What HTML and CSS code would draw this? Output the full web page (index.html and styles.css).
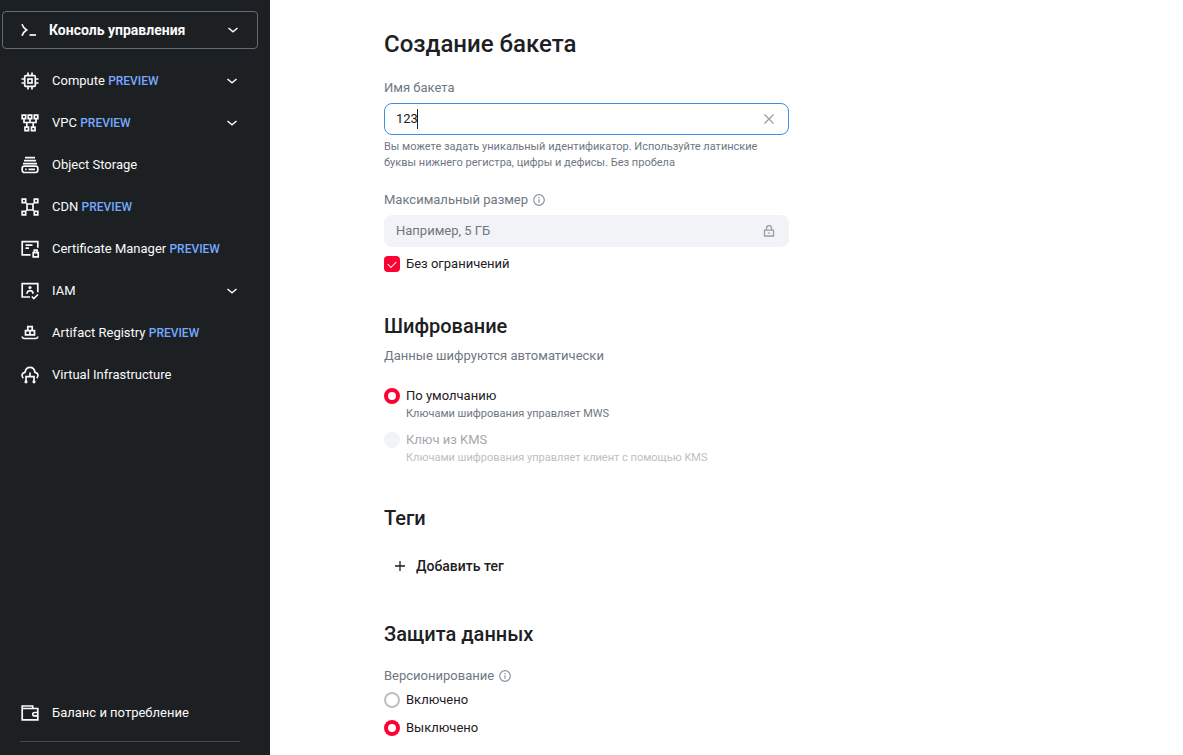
FILE: index.html
```html
<!DOCTYPE html>
<html lang="ru">
<head>
<meta charset="utf-8">
<meta name="viewport" content="width=device-width, initial-scale=1">
<title>Создание бакета</title>
<link rel="stylesheet" href="styles.css">
</head>
<body>
<div class="app">
  <aside class="sidebar">
    <button type="button" class="console">
      <svg class="icon" viewBox="0 0 20 20"><path d="M3 4.200c1 2.800 2.600 4.600 4.600 5.800-2 1.200-3.600 3-4.600 5.800"/><path d="M10.500 15H17"/></svg>
      <span class="console-title">Консоль управления</span>
      <svg class="chevron" viewBox="0 0 12 12"><path d="M1.500 4 6 7.800 10.500 4"/></svg>
    </button>
    <nav class="nav">
      <button type="button" class="nav-item">
        <svg class="icon" viewBox="0 0 20 20"><rect x="4.700" y="4.700" width="10.600" height="10.600" rx="1"/><rect x="8" y="8" width="4" height="4"/><path d="M8 4.500v-3M12 4.500v-3M8 18.500v-3M12 18.500v-3M4.500 8h-3M4.500 12h-3M18.500 8h-3M18.500 12h-3"/></svg>
        <span class="nav-name">Compute <span class="preview">PREVIEW</span></span>
        <svg class="chevron" viewBox="0 0 12 12"><path d="M1.500 4 6 7.800 10.500 4"/></svg>
      </button>
      <button type="button" class="nav-item">
        <svg class="icon" viewBox="0 0 20 20"><path d="M2.200 2.200h3.500v3.500H2.200zM8.200 2.200h3.500v3.500H8.200zM14.300 2.200h3.500v3.500h-3.500zM5 14.200h3.500v3.500H5zM11.500 14.200h3.500v3.500h-3.500zM4 6v3.500h12V6M10 6v3.500M6.800 9.500v4.500M13.200 9.500v4.500"/></svg>
        <span class="nav-name">VPC <span class="preview">PREVIEW</span></span>
        <svg class="chevron" viewBox="0 0 12 12"><path d="M1.500 4 6 7.800 10.500 4"/></svg>
      </button>
      <a class="nav-item" href="#storage">
        <svg class="icon" viewBox="0 0 20 20"><path d="M5 2.700h10M4 5.700h12M3 8.700h14"/><rect x="2.200" y="11.200" width="15.600" height="6.300" rx="2.200"/><path d="M5.200 14.300h1.500M8.500 14.300h6.500"/></svg>
        <span class="nav-name">Object Storage</span>
      </a>
      <a class="nav-item" href="#cdn">
        <svg class="icon" viewBox="0 0 20 20"><path d="M2.200 2.200h3.500v3.500H2.200zM14.300 2.200h3.500v3.500h-3.500zM2.200 14.300h3.500v3.500H2.200zM14.300 14.300h3.500v3.500h-3.500zM7 7h6v6H7zM5.500 5.500l2 2M14.500 5.500l-2 2M5.500 14.500l2-2M14.500 14.500l-2-2"/></svg>
        <span class="nav-name">CDN <span class="preview">PREVIEW</span></span>
      </a>
      <a class="nav-item" href="#certificates">
        <svg class="icon" viewBox="0 0 20 20"><path d="M10.500 15.800H2.200V2.700h15.600v6M5.500 6.200h7M5.500 9.200H9"/><path d="M13.200 13.700h5v4.100h-5zM14.300 13.500v-2.300h2.800v2.300"/></svg>
        <span class="nav-name">Certificate Manager <span class="preview">PREVIEW</span></span>
      </a>
      <button type="button" class="nav-item">
        <svg class="icon" viewBox="0 0 20 20"><path d="M10 16H2.200V2.700h15.600v8.500M11.800 15.500l2 2 4.200-4"/><path d="M7 12.700c0-4.200 6-4.200 6 0"/><circle class="solid" cx="10" cy="6.500" r="1.600"/></svg>
        <span class="nav-name">IAM</span>
        <svg class="chevron" viewBox="0 0 12 12"><path d="M1.500 4 6 7.800 10.500 4"/></svg>
      </button>
      <a class="nav-item" href="#artifacts">
        <svg class="icon" viewBox="0 0 20 20"><path d="M7.800 3.700h4.400v4H7.800zM5.500 7.700H10v4.200H5.500zM10 7.700h4.500v4.200H10zM2.200 13.500c.2 1.500.8 2 2 2h11.600c1.200 0 1.800-.5 2-2"/></svg>
        <span class="nav-name">Artifact Registry <span class="preview">PREVIEW</span></span>
      </a>
      <a class="nav-item" href="#infrastructure">
        <svg class="icon" viewBox="0 0 20 20"><path d="M3.300 13.200C.5 10.500 2.500 7.600 5 7.300 5.500 3.800 7.800 2.300 10 2.300s4.500 1.500 5 5c2.500.3 4.500 3.200 1.700 5.900M10 7.500v4.200M6 16.500v-4.800h8v4.800"/><circle class="solid" cx="6" cy="16.800" r="1.600"/><circle class="solid" cx="14" cy="16.800" r="1.600"/></svg>
        <span class="nav-name">Virtual Infrastructure</span>
      </a>
    </nav>
    <div class="sidebar-footer">
      <a class="nav-item" href="#balance">
        <svg class="icon" viewBox="0 0 20 20"><path d="M2.200 5.500V3h10.500v2.500M2.200 5.500h15.600v11.300H2.200zM17.800 9.500h-3.300a1.700 1.700 0 0 0 0 3.400h3.300"/></svg>
        <span class="nav-name">Баланс и потребление</span>
      </a>
    </div>
  </aside>

  <main class="content">
    <form class="form">
      <h1 class="title">Создание бакета</h1>

      <div class="field">
        <label class="label" for="bucket-name">Имя бакета</label>
        <div class="control control-active">
          <input class="input" id="bucket-name" type="text" value="123" autofocus>
          <button type="button" class="clear" aria-label="Очистить">
            <svg class="glyph" viewBox="0 0 12 12"><path d="M1.500 1.500l9 9M10.500 1.500l-9 9"/></svg>
          </button>
        </div>
        <p class="hint">Вы можете задать уникальный идентификатор. Используйте латинские буквы нижнего регистра, цифры и дефисы. Без пробела</p>
      </div>

      <div class="field field-size">
        <div class="label-row">
          <label class="label" for="max-size">Максимальный размер</label>
          <svg class="info" viewBox="0 0 12 12"><circle cx="6" cy="6" r="5.300"/><path d="M6 5.200v3.600M6 3v1.200"/></svg>
        </div>
        <div class="control control-locked">
          <input class="input" id="max-size" type="text" placeholder="Например, 5 ГБ" disabled>
          <svg class="glyph" viewBox="0 0 12 12"><path d="M1.500 5.200h9v5.800h-9zM3.500 5V3.200a2.500 2.500 0 0 1 5 0V5M6 7.200v1.800"/></svg>
        </div>
        <label class="choice unlimited"><input class="check" type="checkbox" checked><span>Без ограничений</span></label>
      </div>

      <section class="section">
        <h2 class="heading">Шифрование</h2>
        <p class="note">Данные шифруются автоматически</p>
        <div class="choices encryption">
          <label class="choice">
            <input class="radio" type="radio" name="encryption" checked>
            <span>По умолчанию<span class="choice-note">Ключами шифрования управляет MWS</span></span>
          </label>
          <label class="choice choice-disabled">
            <input class="radio" type="radio" name="encryption" disabled>
            <span>Ключ из KMS<span class="choice-note">Ключами шифрования управляет клиент с помощью KMS</span></span>
          </label>
        </div>
      </section>

      <section class="section">
        <h2 class="heading">Теги</h2>
        <button type="button" class="add">
          <svg class="glyph" viewBox="0 0 12 12"><path d="M6 1v10M1 6h10"/></svg>
          Добавить тег
        </button>
      </section>

      <section class="section">
        <h2 class="heading">Защита данных</h2>
        <div class="versioning">
          <div class="label-row">
            <span class="label" id="versioning-label">Версионирование</span>
            <svg class="info" viewBox="0 0 12 12"><circle cx="6" cy="6" r="5.300"/><path d="M6 5.200v3.600M6 3v1.200"/></svg>
          </div>
          <div class="choices" role="radiogroup" aria-labelledby="versioning-label">
            <label class="choice"><input class="radio" type="radio" name="versioning"><span>Включено</span></label>
            <label class="choice"><input class="radio" type="radio" name="versioning" checked><span>Выключено</span></label>
          </div>
        </div>
      </section>
    </form>
  </main>
</div>
</body>
</html>
```
FILE: styles.css
```css
*, *::before, *::after { box-sizing: border-box; }

body {
  margin: 0;
  background: #fff;
  color: #1d2023;
  font-family: Roboto, "Noto Sans", sans-serif;
  font-size: 13px;
  line-height: 20px;
}

h1, h2, p { margin: 0; }

button, input { font: inherit; color: inherit; }

button {
  padding: 0;
  border: 0;
  background: none;
  text-align: left;
  cursor: pointer;
}

svg { flex: none; fill: none; stroke: currentColor; stroke-width: 1.5; }

.app { display: flex; height: 100vh; }

.sidebar {
  display: flex;
  flex: none;
  flex-direction: column;
  width: 270px;
  padding: 11px 0 13px;
  background: #1d2023;
  color: #fafafa;
}

.console {
  display: flex;
  align-items: center;
  gap: 10px;
  height: 38px;
  margin: 0 12px 0 2px;
  padding: 0 18px 0 16px;
  border: 1px solid #626c77;
  border-radius: 4px;
  font-size: 14px;
  font-weight: 700;
}

.console-title { flex: 1; }

.icon { width: 20px; height: 20px; stroke-width: 1.7; }
.solid { fill: currentColor; stroke: none; }
.chevron { width: 12px; height: 12px; }

.nav { display: flex; flex-direction: column; padding-top: 11px; }

.nav-item {
  display: flex;
  align-items: center;
  gap: 12px;
  height: 42px;
  padding: 0 32px 0 20px;
  color: inherit;
  text-decoration: none;
}

.nav-name { flex: 1; white-space: nowrap; }
.preview { color: #74a9ff; font-size: 12px; font-weight: 500; }

.sidebar-footer { margin-top: auto; }

.sidebar-footer::after {
  content: "";
  display: block;
  height: 1px;
  margin: 7px 30px 0 20px;
  background: #45494d;
}

.content {
  flex: 1;
  min-width: 0;
  padding: 30px 32px 16px 114px;
  overflow: hidden;
}

.form { max-width: 405px; }

.title { font-size: 24px; font-weight: 500; line-height: 28px; }
.heading { font-size: 20px; font-weight: 500; line-height: 28px; }

.field { margin-top: 20px; }
.field-size { margin-top: 19px; }
.label, .note { color: #6e7782; }
.label { display: block; }
.label-row { display: flex; align-items: center; gap: 5px; }
.info { width: 12px; height: 12px; color: #8b949e; stroke-width: 1.2; }

.control {
  display: flex;
  align-items: center;
  height: 32px;
  margin-top: 5px;
  padding: 0 13px 0 11px;
  border: 1px solid #f2f3f7;
  border-radius: 8px;
}

.control-active { position: relative; border-color: #3d8ee8; }
.control-active .input { caret-color: transparent; }

/* Steady text caret after the typed value */
.control-active::before {
  content: "";
  position: absolute;
  top: 5px;
  left: 32px;
  width: 1px;
  height: 20px;
  background: #1d2023;
}

.control-locked { background: #f2f3f7; color: #969fa8; }

.input {
  flex: 1;
  min-width: 0;
  padding: 0;
  border: 0;
  outline: 0;
  background: transparent;
}

.input::placeholder { color: #6e7782; opacity: 1; }

.glyph { width: 12px; height: 12px; stroke-width: 1.3; }
.clear { display: flex; color: #969fa8; }

.hint, .choice-note { color: #6e7782; font-size: 11px; line-height: 16px; }
.hint { margin-top: 4px; }

.unlimited { margin-top: 7px; }

.section { margin-top: 38px; }
.note { margin-top: 6px; }
.encryption { margin-top: 20px; }
.versioning { margin-top: 18px; }

.choices { display: flex; flex-direction: column; gap: 8px; }
.versioning .choices { margin-top: 4px; }

.choice { display: flex; align-items: flex-start; gap: 6px; }
.choice-note { display: block; }
.choice-disabled { color: #a5a8ab; }
.choice-disabled .choice-note { color: #bcc0c4; }

.check, .radio {
  flex: none;
  width: 16px;
  height: 16px;
  margin: 2px 0;
  appearance: none;
}

.check { display: grid; place-items: center; border-radius: 4px; background: #ff0032; }

.check::before {
  content: "";
  width: 8px;
  height: 5px;
  margin-bottom: 2px;
  border: solid #fff;
  border-width: 0 0 1px 1px;
  transform: rotate(-45deg);
}

.radio { border: 2px solid #bcc0c4; border-radius: 50%; }
.radio:checked { border: 4px solid #ff0032; }
.radio:disabled { border: 0; background: #f2f3f7; }

.add {
  display: flex;
  align-items: center;
  gap: 10px;
  height: 32px;
  margin-top: 18px;
  padding: 0 10px;
  font-size: 14px;
  font-weight: 500;
}
```
